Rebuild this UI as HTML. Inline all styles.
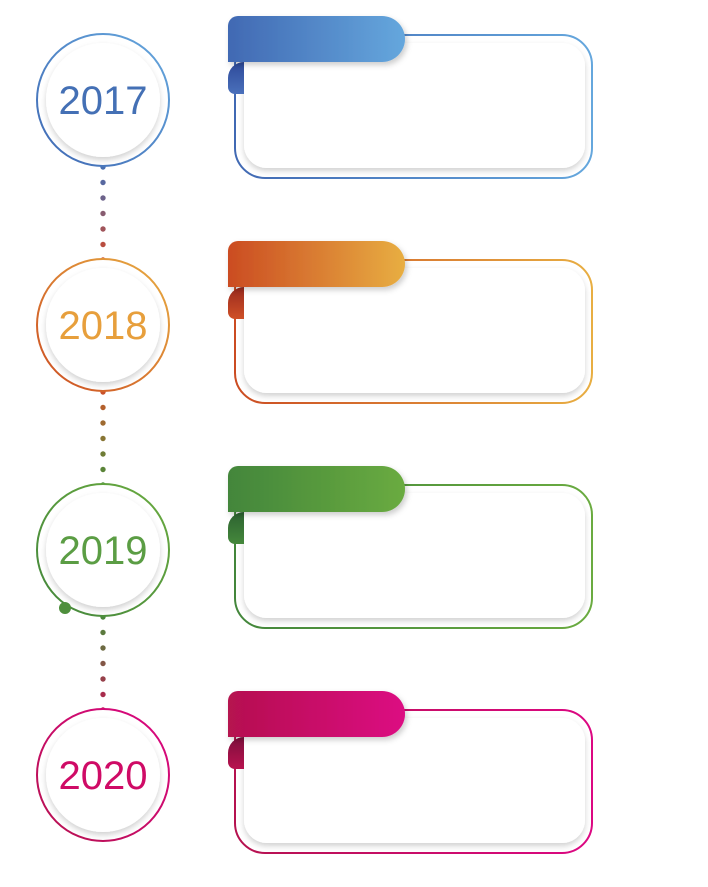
<!DOCTYPE html>
<html><head><meta charset="utf-8"><style>
html,body{margin:0;padding:0;background:#fff;width:708px;height:887px;overflow:hidden}
svg{display:block}
text{font-family:"Liberation Sans","DejaVu Sans",sans-serif}
</style></head><body>
<svg width="708" height="887" viewBox="0 0 708 887" xmlns="http://www.w3.org/2000/svg">
<defs>
<filter id="sh" x="-20%" y="-20%" width="140%" height="150%"><feDropShadow dx="0" dy="3" stdDeviation="3" flood-color="#000" flood-opacity="0.18"/></filter>
<filter id="sh2" x="-20%" y="-40%" width="140%" height="180%"><feDropShadow dx="2" dy="3" stdDeviation="3" flood-color="#000" flood-opacity="0.2"/></filter>
<linearGradient id="g1"><stop offset="0" stop-color="#4169b3"/><stop offset="1" stop-color="#65a7dd"/></linearGradient>
<linearGradient id="g2"><stop offset="0" stop-color="#cb4c22"/><stop offset="1" stop-color="#e8ae42"/></linearGradient>
<linearGradient id="g3"><stop offset="0" stop-color="#43863b"/><stop offset="1" stop-color="#6aab40"/></linearGradient>
<linearGradient id="g4"><stop offset="0" stop-color="#b5124f"/><stop offset="1" stop-color="#dc0782"/></linearGradient>
<linearGradient id="v1" x1="0" y1="1" x2="1" y2="0"><stop offset="0" stop-color="#3f68b3"/><stop offset="1" stop-color="#66a8de"/></linearGradient>
<linearGradient id="v2" x1="0" y1="1" x2="1" y2="0"><stop offset="0" stop-color="#cc4d22"/><stop offset="1" stop-color="#e8ad42"/></linearGradient>
<linearGradient id="v3" x1="0" y1="1" x2="1" y2="0"><stop offset="0" stop-color="#43863b"/><stop offset="1" stop-color="#6aab40"/></linearGradient>
<linearGradient id="v4" x1="0" y1="1" x2="1" y2="0"><stop offset="0" stop-color="#b5124f"/><stop offset="1" stop-color="#dc0782"/></linearGradient>
<linearGradient id="c1" x1="0" y1="0" x2="0" y2="1"><stop offset="0" stop-color="#2e4a9a"/><stop offset="1" stop-color="#4a70bb"/></linearGradient>
<linearGradient id="c2" x1="0" y1="0" x2="0" y2="1"><stop offset="0" stop-color="#9a2a1e"/><stop offset="1" stop-color="#cf5027"/></linearGradient>
<linearGradient id="c3" x1="0" y1="0" x2="0" y2="1"><stop offset="0" stop-color="#2c6230"/><stop offset="1" stop-color="#45883c"/></linearGradient>
<linearGradient id="c4" x1="0" y1="0" x2="0" y2="1"><stop offset="0" stop-color="#7e0f3c"/><stop offset="1" stop-color="#b8124f"/></linearGradient>
</defs>

<g>
<circle cx="103" cy="167" r="2.7" fill="#4a6fb0"/><circle cx="103" cy="182.5" r="2.7" fill="#5868a0"/><circle cx="103" cy="198" r="2.7" fill="#6c628a"/><circle cx="103" cy="213.5" r="2.7" fill="#875c70"/><circle cx="103" cy="229" r="2.7" fill="#a0545a"/><circle cx="103" cy="244.5" r="2.7" fill="#b94e40"/><circle cx="103" cy="260" r="2.7" fill="#c94e28"/>
<circle cx="103" cy="392" r="2.7" fill="#c9512a"/><circle cx="103" cy="407.5" r="2.7" fill="#b4602c"/><circle cx="103" cy="423" r="2.7" fill="#9e6a30"/><circle cx="103" cy="438.5" r="2.7" fill="#887534"/><circle cx="103" cy="454" r="2.7" fill="#6f7c36"/><circle cx="103" cy="469.5" r="2.7" fill="#5a8438"/><circle cx="103" cy="485" r="2.7" fill="#4b8a3a"/>
<circle cx="103" cy="617" r="2.7" fill="#4a863b"/><circle cx="103" cy="632.5" r="2.7" fill="#5b7a3e"/><circle cx="103" cy="648" r="2.7" fill="#6d6a42"/><circle cx="103" cy="663.5" r="2.7" fill="#825646"/><circle cx="103" cy="679" r="2.7" fill="#96404a"/><circle cx="103" cy="694.5" r="2.7" fill="#a82c4c"/><circle cx="103" cy="710" r="2.7" fill="#b8164f"/>
</g>

<g>
<line x1="170" y1="100" x2="235" y2="100" stroke="url(#g1)" stroke-width="1.5"/>
<circle cx="103" cy="100" r="66" fill="#fff" stroke="url(#v1)" stroke-width="2"/>
<circle cx="103" cy="100" r="57" fill="#fff" filter="url(#sh)"/>
<text x="103" y="114" text-anchor="middle" font-size="40" fill="#4470b5">2017</text>
<rect x="235" y="35" width="357" height="143" rx="30" fill="#fff" stroke="url(#g1)" stroke-width="2"/>
<rect x="244" y="43" width="341" height="125" rx="23" fill="#fff" filter="url(#sh)"/>
<path d="M228 78 A16 16 0 0 1 244 62 V94 H235 A7 7 0 0 1 228 87 Z" fill="url(#c1)"/>
<path d="M238 16 H382 A23 23 0 0 1 382 62 H228 V26 A10 10 0 0 1 238 16 Z" fill="url(#g1)" filter="url(#sh2)"/>
</g>

<g transform="translate(0,225)">
<line x1="170" y1="100" x2="235" y2="100" stroke="url(#g2)" stroke-width="1.5"/>
<circle cx="103" cy="100" r="66" fill="#fff" stroke="url(#v2)" stroke-width="2"/>
<circle cx="103" cy="100" r="57" fill="#fff" filter="url(#sh)"/>
<text x="103" y="114" text-anchor="middle" font-size="40" fill="#e79f3c">2018</text>
<rect x="235" y="35" width="357" height="143" rx="30" fill="#fff" stroke="url(#g2)" stroke-width="2"/>
<rect x="244" y="43" width="341" height="125" rx="23" fill="#fff" filter="url(#sh)"/>
<path d="M228 78 A16 16 0 0 1 244 62 V94 H235 A7 7 0 0 1 228 87 Z" fill="url(#c2)"/>
<path d="M238 16 H382 A23 23 0 0 1 382 62 H228 V26 A10 10 0 0 1 238 16 Z" fill="url(#g2)" filter="url(#sh2)"/>
</g>

<g transform="translate(0,450)">
<line x1="170" y1="100" x2="235" y2="100" stroke="url(#g3)" stroke-width="1.5"/>
<circle cx="103" cy="100" r="66" fill="#fff" stroke="url(#v3)" stroke-width="2"/>
<circle cx="103" cy="100" r="57" fill="#fff" filter="url(#sh)"/>
<text x="103" y="114" text-anchor="middle" font-size="40" fill="#5b9d44">2019</text>
<circle cx="65" cy="158" r="6" fill="#4e8f3c"/>
<rect x="235" y="35" width="357" height="143" rx="30" fill="#fff" stroke="url(#g3)" stroke-width="2"/>
<rect x="244" y="43" width="341" height="125" rx="23" fill="#fff" filter="url(#sh)"/>
<path d="M228 78 A16 16 0 0 1 244 62 V94 H235 A7 7 0 0 1 228 87 Z" fill="url(#c3)"/>
<path d="M238 16 H382 A23 23 0 0 1 382 62 H228 V26 A10 10 0 0 1 238 16 Z" fill="url(#g3)" filter="url(#sh2)"/>
</g>

<g transform="translate(0,675)">
<line x1="170" y1="100" x2="235" y2="100" stroke="url(#g4)" stroke-width="1.5"/>
<circle cx="103" cy="100" r="66" fill="#fff" stroke="url(#v4)" stroke-width="2"/>
<circle cx="103" cy="100" r="57" fill="#fff" filter="url(#sh)"/>
<text x="103" y="114" text-anchor="middle" font-size="40" fill="#cf0b66">2020</text>
<rect x="235" y="35" width="357" height="143" rx="30" fill="#fff" stroke="url(#g4)" stroke-width="2"/>
<rect x="244" y="43" width="341" height="125" rx="23" fill="#fff" filter="url(#sh)"/>
<path d="M228 78 A16 16 0 0 1 244 62 V94 H235 A7 7 0 0 1 228 87 Z" fill="url(#c4)"/>
<path d="M238 16 H382 A23 23 0 0 1 382 62 H228 V26 A10 10 0 0 1 238 16 Z" fill="url(#g4)" filter="url(#sh2)"/>
</g>
</svg>
</body></html>
